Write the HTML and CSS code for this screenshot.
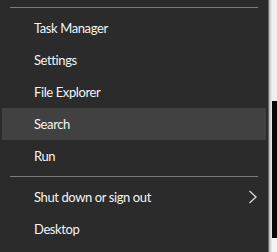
FILE: index.html
```html
<!DOCTYPE html>
<html lang="en">
<head>
  <meta charset="UTF-8">
  <meta name="viewport" content="width=device-width, initial-scale=1.0">
  <title>Quick Link Menu</title>
  <link rel="stylesheet" href="styles.css">
</head>
<body>
  <div class="screen">
    <div class="menu">
      <div class="separator"></div>
      <div class="menu-item"><span class="label">Task Manager</span></div>
      <div class="menu-item"><span class="label">Settings</span></div>
      <div class="menu-item"><span class="label">File Explorer</span></div>
      <div class="menu-item active"><span class="label">Search</span></div>
      <div class="menu-item"><span class="label">Run</span></div>
      <div class="separator"></div>
      <div class="menu-item has-sub">
        <span class="label">Shut down or sign out</span>
        <svg class="chevron" width="10" height="14" viewBox="0 0 10 14">
          <path d="M1.5 1 L8 7 L1.5 13" fill="none" stroke="#d8d8d8" stroke-width="1.3"/>
        </svg>
      </div>
      <div class="menu-item"><span class="label">Desktop</span></div>
    </div>
    <div class="edge"></div>
    <div class="behind">
      <div class="behind-top"></div>
      <div class="behind-mid"></div>
      <div class="behind-bottom"></div>
    </div>
  </div>
</body>
</html>
```

FILE: styles.css
```css
:root {
  --menu-bg: #2b2b2b;
  --hover: #414141;
  --text: #f4f4f4;
  --line: #7a7a7a;
}

* {
  box-sizing: border-box;
  margin: 0;
  padding: 0;
}

body {
  width: 277px;
  height: 252px;
  overflow: hidden;
  background: var(--menu-bg);
  font-family: "Lato", "Noto Sans", sans-serif;
}

.screen {
  display: flex;
  height: 252px;
}

.menu {
  width: 268px;
  background: var(--menu-bg);
  padding: 3px 2px 0 2px;
}

.separator {
  height: 9px;
  padding: 0 8px;
  display: flex;
  align-items: center;
}

.separator::after {
  content: "";
  display: block;
  width: 100%;
  height: 1px;
  background: var(--line);
}

.menu-item {
  height: 32px;
  padding: 0 8px 0 32px;
  display: flex;
  align-items: center;
  justify-content: space-between;
  color: var(--text);
  font-size: 13px;
  letter-spacing: -0.4px;
}

.menu-item.active {
  background: var(--hover);
}

.chevron {
  display: block;
}

.edge {
  width: 4px;
  background: linear-gradient(to right, #3a3a3a, #b8b8b8, #d8d8d8, #efefef);
}

.behind {
  flex: 1;
  display: flex;
  flex-direction: column;
}

.behind-top {
  height: 101px;
  background: #f0f0f0;
}

.behind-mid {
  height: 137px;
  background: #0a0a0a;
}

.behind-bottom {
  flex: 1;
  background: #f4f4f4;
}
```
